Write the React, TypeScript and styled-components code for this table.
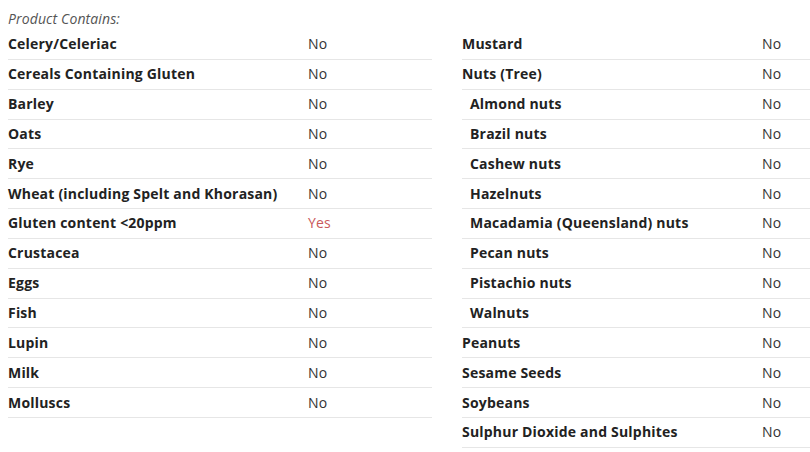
import React from "react";
import styled, { createGlobalStyle } from "styled-components";

const Global = createGlobalStyle`
  html, body { margin: 0; padding: 0; background: #fff; overflow: hidden; }
  body { font-family: "Open Sans", "Liberation Sans", sans-serif; color: #222; }
`;

const Page = styled.div`
  padding: 8px 0 0 8px;
  width: 802px;
  overflow: hidden;
`;

const Heading = styled.div`
  font-size: 14px;
  font-style: italic;
  color: #555;
  line-height: 21px;
  height: 22px;
  letter-spacing: 0.12px;
`;

const Columns = styled.div`
  display: grid;
  grid-template-columns: 424px 424px;
  column-gap: 30px;
  align-items: start;
`;

const Table = styled.div`
  display: flex;
  flex-direction: column;
`;

const Row = styled.div`
  display: grid;
  grid-template-columns: 300px 1fr;
  box-sizing: border-box;
  height: 29.85px;
  padding-bottom: 1px;
  align-items: center;
  border-bottom: 1px solid #e6e6e6;
  font-size: 14px;
`;

const Label = styled.div<{ $sub?: boolean }>`
  font-weight: 700;
  color: #222;
  letter-spacing: 0.2px;
  padding-left: ${(p) => (p.$sub ? "8px" : "0")};
  white-space: nowrap;
`;

const Value = styled.div<{ $yes?: boolean }>`
  color: ${(p) => (p.$yes ? "#c9595b" : "#333")};
  letter-spacing: 0.1px;
`;

type Item = { label: string; value: string; sub?: boolean };

const left: Item[] = [
  { label: "Celery/Celeriac", value: "No" },
  { label: "Cereals Containing Gluten", value: "No" },
  { label: "Barley", value: "No" },
  { label: "Oats", value: "No" },
  { label: "Rye", value: "No" },
  { label: "Wheat (including Spelt and Khorasan)", value: "No" },
  { label: "Gluten content <20ppm", value: "Yes" },
  { label: "Crustacea", value: "No" },
  { label: "Eggs", value: "No" },
  { label: "Fish", value: "No" },
  { label: "Lupin", value: "No" },
  { label: "Milk", value: "No" },
  { label: "Molluscs", value: "No" },
];

const right: Item[] = [
  { label: "Mustard", value: "No" },
  { label: "Nuts (Tree)", value: "No" },
  { label: "Almond nuts", value: "No", sub: true },
  { label: "Brazil nuts", value: "No", sub: true },
  { label: "Cashew nuts", value: "No", sub: true },
  { label: "Hazelnuts", value: "No", sub: true },
  { label: "Macadamia (Queensland) nuts", value: "No", sub: true },
  { label: "Pecan nuts", value: "No", sub: true },
  { label: "Pistachio nuts", value: "No", sub: true },
  { label: "Walnuts", value: "No", sub: true },
  { label: "Peanuts", value: "No" },
  { label: "Sesame Seeds", value: "No" },
  { label: "Soybeans", value: "No" },
  { label: "Sulphur Dioxide and Sulphites", value: "No" },
];

const List = ({ items }: { items: Item[] }) => (
  <Table>
    {items.map((it) => (
      <Row key={it.label}>
        <Label $sub={it.sub}>{it.label}</Label>
        <Value $yes={it.value === "Yes"}>{it.value}</Value>
      </Row>
    ))}
  </Table>
);

export default function App() {
  return (
    <>
      <Global />
      <Page>
        <Heading>Product Contains:</Heading>
        <Columns>
          <List items={left} />
          <List items={right} />
        </Columns>
      </Page>
    </>
  );
}
